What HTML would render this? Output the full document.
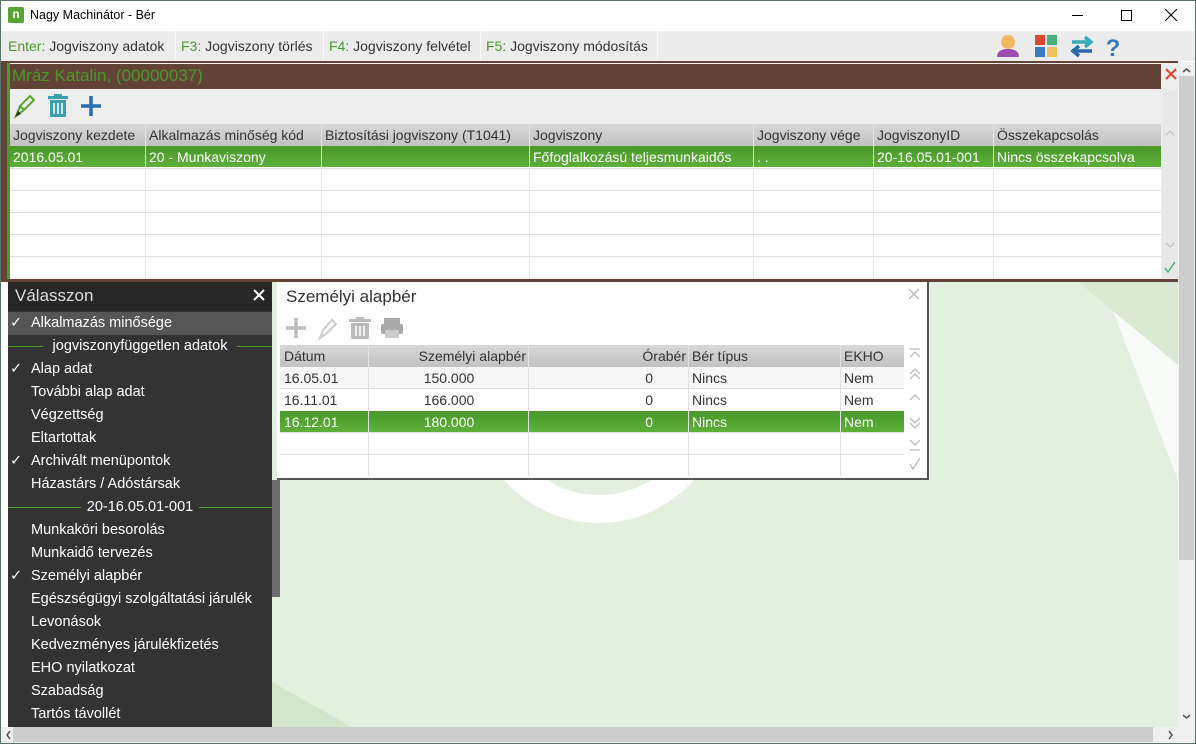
<!DOCTYPE html>
<html><head><meta charset="utf-8"><style>
*{box-sizing:border-box;margin:0;padding:0}
body{width:1196px;height:744px;overflow:hidden;font-family:"Liberation Sans",sans-serif;font-size:14px;background:#fff;position:relative}
.abs{position:absolute}
.tb span.k{color:#4a9a2a}
.cell{position:absolute;white-space:nowrap;overflow:hidden}
.menu div{position:absolute;left:0;width:264px;height:23px;line-height:23px;color:#fff;font-size:14.5px;padding-left:23px}
.menu .sep{padding:0;text-align:center}
</style></head><body>
<div class="abs" style="left:0;top:0;width:1196px;height:744px;border:1px solid #5b7468"></div>
<div class="abs" style="left:8px;top:7px;width:16px;height:16px;background:#5aa531;border-radius:2px;color:#fff;font-size:12px;font-weight:bold;line-height:15px;text-align:center">n</div>
<div class="abs" style="left:30px;top:8px;font-size:12.5px;color:#000">Nagy Machinátor - Bér</div>
<div class="abs" style="left:1072px;top:15px;width:11px;height:1px;background:#000"></div>
<div class="abs" style="left:1121px;top:10px;width:11px;height:11px;border:1px solid #000"></div>
<svg class="abs" style="left:1165px;top:9px" width="12" height="12"><path d="M0 0L12 12M12 0L0 12" stroke="#000" stroke-width="1.1"/></svg>
<div class="abs tb" style="left:1px;top:31px;width:1194px;height:30px;background:#ececec;color:#333;font-size:14px">
<div class="abs" style="left:7px;top:7px"><span class="k">Enter:</span> Jogviszony adatok</div>
<div class="abs" style="left:174px;top:0;width:1px;height:30px;background:#fafafa"></div>
<div class="abs" style="left:180px;top:7px"><span class="k">F3:</span> Jogviszony törlés</div>
<div class="abs" style="left:322px;top:0;width:1px;height:30px;background:#fafafa"></div>
<div class="abs" style="left:328px;top:7px"><span class="k">F4:</span> Jogviszony felvétel</div>
<div class="abs" style="left:479px;top:0;width:1px;height:30px;background:#fafafa"></div>
<div class="abs" style="left:485px;top:7px"><span class="k">F5:</span> Jogviszony módosítás</div>
<div class="abs" style="left:656px;top:0;width:1px;height:30px;background:#fafafa"></div>
</div>
<svg class="abs" style="left:994px;top:32px" width="140" height="28">
<circle cx="14" cy="10" r="7" fill="#f0b860"/><path d="M3 25Q3 17 14 17Q25 17 25 25Z" fill="#9b4fb0"/>
<rect x="41" y="3" width="10" height="10" fill="#d9482e"/><rect x="53" y="3" width="10" height="10" fill="#4aad7a"/><rect x="41" y="15" width="10" height="10" fill="#3a7ac0"/><rect x="53" y="15" width="10" height="10" fill="#f0c060"/>
<path d="M78 10H96M91 5L97 10L91 15" stroke="#3aaab8" stroke-width="3.5" fill="none"/><path d="M98 19H80M85 14L79 19L85 24" stroke="#2a6ab0" stroke-width="3.5" fill="none"/>
<text x="119" y="24" font-family="Liberation Sans" font-weight="bold" font-size="24" fill="#3a7ac0" text-anchor="middle">?</text>
</svg>
<div class="abs" style="left:1px;top:61px;width:1177px;height:221px;background:#634238"></div>
<div class="abs" style="left:7px;top:63px;width:1171px;height:216px;background:#eeeeee;border-left:3px solid #4a9a2a"></div>
<div class="abs" style="left:10px;top:64px;width:1151px;height:25px;background:#634238;color:#4a9a2a;font-size:17px;line-height:24px;padding-left:2px">Mráz Katalin, (00000037)</div>
<svg class="abs" style="left:1164px;top:67px" width="14" height="14"><path d="M2 2L12 12M12 2L2 12" stroke="#d9482e" stroke-width="2"/></svg>
<svg class="abs" style="left:12px;top:92px" width="95" height="28">
<path d="M4 24L8 14L18 4L22 8L12 18Z M8 14L12 18" stroke="#5aa531" stroke-width="2" fill="none"/><path d="M3 25L6 19L9 22Z" fill="#333"/>
<rect x="36" y="4" width="20" height="3" fill="#3aa0b0"/><rect x="42" y="2" width="8" height="3" fill="#3aa0b0"/><rect x="38" y="8" width="16" height="17" fill="#3aa0b0"/><path d="M42 11V22M46 11V22M50 11V22" stroke="#fff" stroke-width="1.5"/>
<path d="M79 4V24M69 14H89" stroke="#2a6ab0" stroke-width="3.5"/>
</svg>
<div class="abs" style="left:10px;top:124px;width:1151px;height:154px;background:#fff"></div>
<div class="abs" style="left:10px;top:124px;width:1151px;height:22px;background:linear-gradient(#d8d8d8,#c2c2c2)"></div>
<div class="abs" style="left:10px;top:146px;width:1151px;height:21px;background:linear-gradient(#4a9a2a,#5eae3a)"></div>
<svg class="abs" style="left:10px;top:124px" width="1151" height="154">
<g stroke="#ddd"><line x1="0" y1="44.5" x2="1151" y2="44.5"/><line x1="0" y1="66.5" x2="1151" y2="66.5"/><line x1="0" y1="88.5" x2="1151" y2="88.5"/><line x1="0" y1="110.5" x2="1151" y2="110.5"/><line x1="0" y1="132.5" x2="1151" y2="132.5"/></g>
<g stroke="#e4e4e4"><line x1="135.5" y1="0" x2="135.5" y2="154"/><line x1="311.5" y1="0" x2="311.5" y2="154"/><line x1="519.5" y1="0" x2="519.5" y2="154"/><line x1="743.5" y1="0" x2="743.5" y2="154"/><line x1="863.5" y1="0" x2="863.5" y2="154"/><line x1="983.5" y1="0" x2="983.5" y2="154"/></g>
</svg>
<div style="color:#333">
<div class="cell" style="left:13px;top:127px">Jogviszony kezdete</div>
<div class="cell" style="left:149px;top:127px">Alkalmazás minőség kód</div>
<div class="cell" style="left:325px;top:127px">Biztosítási jogviszony (T1041)</div>
<div class="cell" style="left:533px;top:127px">Jogviszony</div>
<div class="cell" style="left:757px;top:127px">Jogviszony vége</div>
<div class="cell" style="left:877px;top:127px">JogviszonyID</div>
<div class="cell" style="left:997px;top:127px">Összekapcsolás</div>
</div>
<div style="color:#fff">
<div class="cell" style="left:13px;top:149px">2016.05.01</div>
<div class="cell" style="left:149px;top:149px">20 - Munkaviszony</div>
<div class="cell" style="left:533px;top:149px">Főfoglalkozású teljesmunkaidős</div>
<div class="cell" style="left:757px;top:149px">. .</div>
<div class="cell" style="left:877px;top:149px">20-16.05.01-001</div>
<div class="cell" style="left:997px;top:149px">Nincs összekapcsolva</div>
</div>
<div class="abs" style="left:1162px;top:90px;width:16px;height:188px;background:#e8e8e8"></div>
<svg class="abs" style="left:1162px;top:124px" width="16" height="154"><path d="M4 11L8 7L12 11" stroke="#bbb" fill="none"/><path d="M4 119L8 123L12 119" stroke="#bbb" fill="none"/><path d="M3 144L6 148L13 138" stroke="#4aad7a" stroke-width="1.5" fill="none"/></svg>
<div class="abs" style="left:272px;top:282px;width:906px;height:445px;background:#e3efdf;overflow:hidden">
<svg width="906" height="445"><polygon points="806,0 906,0 906,83 841,29" fill="#d9e9d2"/><polygon points="841,29 906,83 906,198" fill="#f8fbf7"/><polygon points="0,400 0,445 80,445" fill="#d3e6cb"/><circle cx="327" cy="115" r="112" fill="none" stroke="#fff" stroke-width="28"/></svg>
</div>
<div class="abs" style="left:1178px;top:62px;width:17px;height:665px;background:#f0f0f0"></div>
<div class="abs" style="left:1179px;top:76px;width:15px;height:484px;background:#cdcdcd"></div>
<svg class="abs" style="left:1178px;top:62px" width="17" height="665"><path d="M5 10L8.5 7L12 10" stroke="#555" stroke-width="1.5" fill="none"/><path d="M5 653L8.5 656L12 653" stroke="#555" stroke-width="1.5" fill="none"/></svg>
<div class="abs" style="left:1px;top:727px;width:1194px;height:16px;background:#f0f0f0"></div>
<div class="abs" style="left:13px;top:727px;width:1140px;height:15px;background:#cdcdcd"></div>
<svg class="abs" style="left:1px;top:727px" width="1194" height="16"><path d="M9 4L6 8L9 12" stroke="#555" stroke-width="1.5" fill="none"/><path d="M1168 4L1171 8L1168 12" stroke="#555" stroke-width="1.5" fill="none"/></svg>
<div class="abs" style="left:272px;top:480px;width:8px;height:117px;background:#6d6d6d"></div>
<div class="abs menu" style="left:8px;top:282px;width:264px;height:445px;background:#333">
<div style="top:0;height:29px;line-height:28px;background:#272727;font-size:17px;padding-left:7px;color:#ddd">Válasszon</div>
<svg class="abs" style="left:245px;top:7px" width="12" height="12"><path d="M1 1L11 11M11 1L1 11" stroke="#fff" stroke-width="2"/></svg>
<div style="top:30px;background:#555"><span style="position:absolute;left:2px">✓</span>Alkalmazás minősége</div>
<div class="sep" style="top:53px">jogviszonyfüggetlen adatok<i style="position:absolute;left:0;top:11px;width:35px;height:1px;background:#4a9a2a"></i><i style="position:absolute;right:0;top:11px;width:35px;height:1px;background:#4a9a2a"></i></div>
<div style="top:76px"><span style="position:absolute;left:2px">✓</span>Alap adat</div>
<div style="top:99px">További alap adat</div>
<div style="top:122px">Végzettség</div>
<div style="top:145px">Eltartottak</div>
<div style="top:168px"><span style="position:absolute;left:2px">✓</span>Archivált menüpontok</div>
<div style="top:191px">Házastárs / Adóstársak</div>
<div class="sep" style="top:214px">20-16.05.01-001<i style="position:absolute;left:0;top:11px;width:73px;height:1px;background:#4a9a2a"></i><i style="position:absolute;right:0;top:11px;width:73px;height:1px;background:#4a9a2a"></i></div>
<div style="top:237px">Munkaköri besorolás</div>
<div style="top:260px">Munkaidő tervezés</div>
<div style="top:283px"><span style="position:absolute;left:2px">✓</span>Személyi alapbér</div>
<div style="top:306px">Egészségügyi szolgáltatási járulék</div>
<div style="top:329px">Levonások</div>
<div style="top:352px">Kedvezményes járulékfizetés</div>
<div style="top:375px">EHO nyilatkozat</div>
<div style="top:398px">Szabadság</div>
<div style="top:421px">Tartós távollét</div>
</div>
<div class="abs" style="left:277px;top:282px;width:652px;height:198px;background:#fff;border-right:2px solid #555;border-bottom:2px solid #555"></div>
<div class="abs" style="left:286px;top:287px;font-size:17px;color:#333">Személyi alapbér</div>
<svg class="abs" style="left:908px;top:288px" width="12" height="12"><path d="M1 1L11 11M11 1L1 11" stroke="#bbb" stroke-width="1.5"/></svg>
<svg class="abs" style="left:282px;top:316px" width="130" height="24">
<path d="M14 2V22M4 12H24" stroke="#bbb" stroke-width="3.5"/>
<path d="M38 22L41 14L50 4L54 8L45 17Z" stroke="#ccc" stroke-width="2" fill="none"/>
<rect x="67" y="3" width="22" height="3" fill="#bbb"/><rect x="74" y="1" width="8" height="3" fill="#bbb"/><rect x="69" y="7" width="18" height="16" fill="#bbb"/><path d="M74 10V20M78 10V20M82 10V20" stroke="#fff" stroke-width="1.5"/>
<rect x="102" y="2" width="16" height="6" fill="#aaa"/><rect x="99" y="8" width="22" height="10" rx="2" fill="#aaa"/><rect x="103" y="14" width="14" height="8" fill="#ccc"/>
</svg>
<div class="abs" style="left:280px;top:345px;width:624px;height:22px;background:linear-gradient(#d8d8d8,#c2c2c2)"></div>
<div class="abs" style="left:280px;top:367px;width:624px;height:21px;background:#f7f7f7"></div>
<div class="abs" style="left:280px;top:411px;width:624px;height:21px;background:linear-gradient(#4a9a2a,#5eae3a)"></div>
<svg class="abs" style="left:280px;top:345px" width="624" height="132">
<g stroke="#ddd"><line x1="0" y1="43.5" x2="624" y2="43.5"/><line x1="0" y1="87.5" x2="624" y2="87.5"/><line x1="0" y1="109.5" x2="624" y2="109.5"/></g>
<g stroke="#e2e2e2"><line x1="88.5" y1="0" x2="88.5" y2="132"/><line x1="248.5" y1="0" x2="248.5" y2="132"/><line x1="408.5" y1="0" x2="408.5" y2="132"/><line x1="560.5" y1="0" x2="560.5" y2="132"/></g>
</svg>
<div style="color:#333">
<div class="cell" style="left:284px;top:348px">Dátum</div>
<div class="cell" style="left:369px;top:348px;width:157px;text-align:right">Személyi alapbér</div>
<div class="cell" style="left:529px;top:348px;width:157px;text-align:right">Órabér</div>
<div class="cell" style="left:692px;top:348px">Bér típus</div>
<div class="cell" style="left:844px;top:348px">EKHO</div>
<div class="cell" style="left:284px;top:370px">16.05.01</div><div class="cell" style="left:369px;top:370px;width:160px;text-align:center">150.000</div><div class="cell" style="left:529px;top:370px;width:124px;text-align:right">0</div><div class="cell" style="left:692px;top:370px">Nincs</div><div class="cell" style="left:844px;top:370px">Nem</div>
<div class="cell" style="left:284px;top:392px">16.11.01</div><div class="cell" style="left:369px;top:392px;width:160px;text-align:center">166.000</div><div class="cell" style="left:529px;top:392px;width:124px;text-align:right">0</div><div class="cell" style="left:692px;top:392px">Nincs</div><div class="cell" style="left:844px;top:392px">Nem</div>
</div>
<div style="color:#fff">
<div class="cell" style="left:284px;top:414px">16.12.01</div><div class="cell" style="left:369px;top:414px;width:160px;text-align:center">180.000</div><div class="cell" style="left:529px;top:414px;width:124px;text-align:right">0</div><div class="cell" style="left:692px;top:414px">Nincs</div><div class="cell" style="left:844px;top:414px">Nem</div>
</div>
<svg class="abs" style="left:907px;top:346px" width="16" height="130" stroke="#bbb" stroke-width="1.3" fill="none">
<path d="M3 3H13M3 11L8 6L13 11"/><path d="M3 28L8 23L13 28M3 33L8 28L13 33"/><path d="M3 54L8 49L13 54"/><path d="M3 72L8 77L13 72M3 77L8 82L13 77"/><path d="M3 94L8 99L13 94M3 104H13"/><path d="M3 118L6 123L13 112"/>
</svg>
</body></html>
